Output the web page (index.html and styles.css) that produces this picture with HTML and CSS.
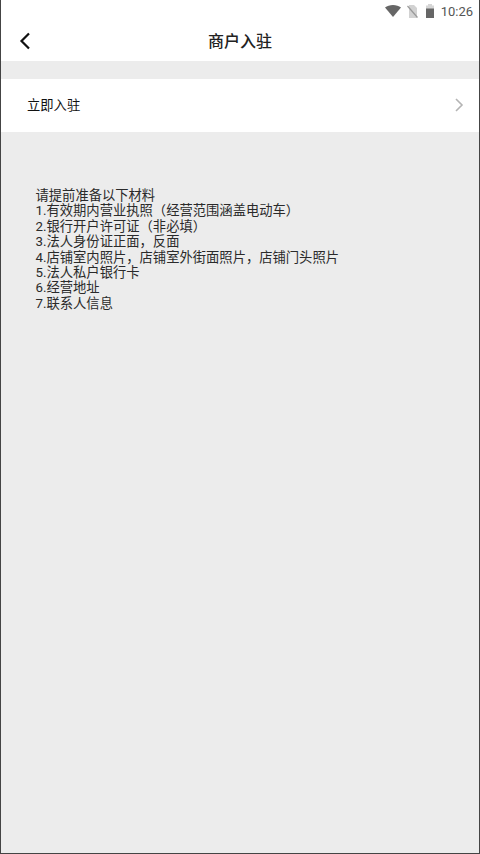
FILE: index.html
```html
<!DOCTYPE html>
<html lang="zh-CN">
<head>
    <meta charset="UTF-8">
    <meta name="viewport" content="width=device-width, initial-scale=1.0">
    <title>商户入驻</title>
    <link rel="stylesheet" href="styles.css">
</head>
<body>
<div class="screen">
    <!-- Status bar -->
    <div class="status-bar">
        <svg class="icon-wifi" width="16" height="12" viewBox="0 0 16 12"><path d="M0 2.5C2 .9 4.900 0 8 0s6 .9 8 2.500L8 12z" fill="#666"/></svg>
        <svg class="icon-sim" width="11" height="13" viewBox="0 0 11 13"><path d="M2 0h5l3 3v10H2z" fill="#d2d2d2"/><path d="M.5 1l10 11.500" stroke="#999" stroke-width="1.200"/></svg>
        <svg class="icon-battery" width="10" height="14" viewBox="0 0 10 14"><path d="M3 0h4v1.500h2V14H1V1.500h2z" fill="#d6d6d6"/><path d="M1 4.500h8V14H1z" fill="#666"/></svg>
        <span class="clock">10:26</span>
    </div>

    <!-- Title bar -->
    <div class="title-bar">
        <svg class="back" width="12" height="18" viewBox="0 0 12 18"><path d="M10 1.500L2.500 9l7.500 7.500" fill="none" stroke="#111" stroke-width="2.200"/></svg>
        <h1>商户入驻</h1>
    </div>

    <div class="row">
        <span>立即入驻</span>
        <svg width="9" height="14" viewBox="0 0 9 14"><path d="M1 1l6 6-6 6" fill="none" stroke="#b4b4b4" stroke-width="1.600"/></svg>
    </div>

    <div class="notes">
        <p>请提前准备以下材料</p>
        <p>1.有效期内营业执照（经营范围涵盖电动车）</p>
        <p>2.银行开户许可证（非必填）</p>
        <p>3.法人身份证正面，反面</p>
        <p>4.店铺室内照片，店铺室外街面照片，店铺门头照片</p>
        <p>5.法人私户银行卡</p>
        <p>6.经营地址</p>
        <p>7.联系人信息</p>
    </div>
</div>
</body>
</html>
```

FILE: styles.css
```css
html, body {
    margin: 0;
    padding: 0;
}

body {
    font-family: "Roboto", "Noto Sans CJK SC", sans-serif;
    color: #222;
}

.screen {
    box-sizing: border-box;
    width: 480px;
    height: 854px;
    display: flex;
    flex-direction: column;
    background: #ececec;
    border: 1px solid #444;
    border-top: none;
    overflow: hidden;
}

.status-bar {
    height: 22px;
    background: #fff;
    display: flex;
    align-items: center;
    justify-content: flex-end;
    padding-right: 6px;
    color: #555;
    font-size: 13px;
}

.icon-wifi {
    margin-right: 6px;
}

.icon-sim {
    margin-right: 7px;
}

.icon-battery {
    margin-right: 6px;
}

.title-bar {
    box-sizing: border-box;
    height: 39px;
    background: #fff;
    display: flex;
    align-items: center;
    justify-content: center;
    padding-bottom: 4px;
    position: relative;
}

.title-bar h1 {
    margin: 0;
    font-size: 16px;
    font-weight: 500;
    color: #222;
}

.back {
    position: absolute;
    left: 18px;
    top: 10px;
}

.row {
    box-sizing: border-box;
    margin-top: 18px;
    height: 53px;
    background: #fff;
    display: flex;
    align-items: center;
    justify-content: space-between;
    padding: 0 15px 2px 26px;
    font-size: 13.300px;
    color: #111;
}

.notes {
    padding: 56px 0 0 34.500px;
    font-size: 13.300px;
    line-height: 15.400px;
    color: #2a2a2a;
}

.notes p {
    margin: 0;
}
```
